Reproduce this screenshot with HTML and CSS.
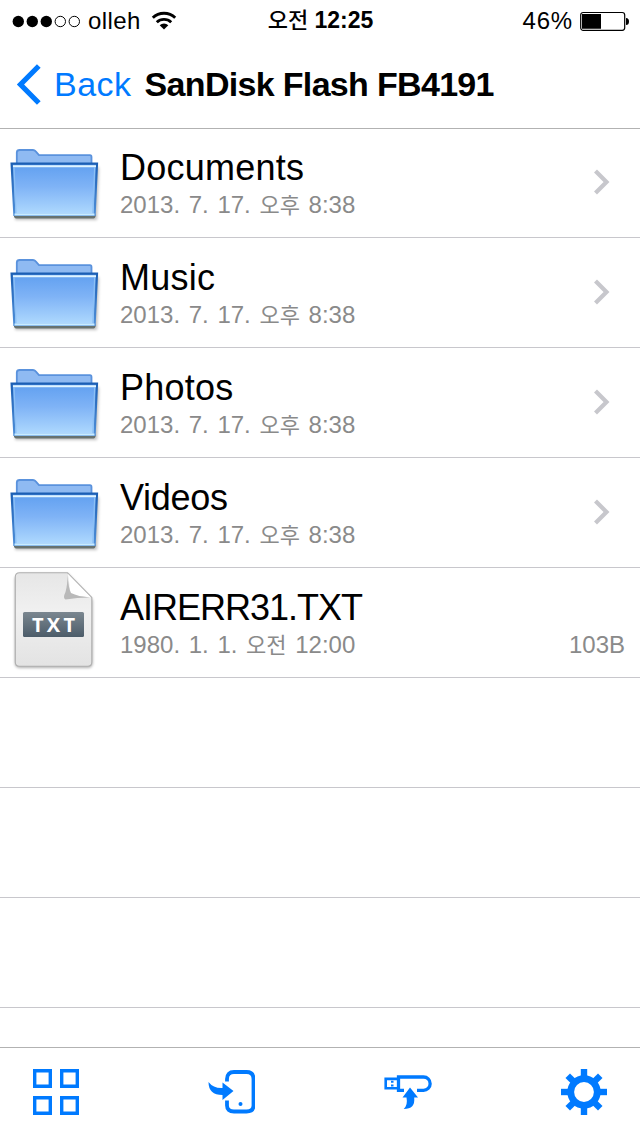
FILE: index.html
```html
<!DOCTYPE html>
<html lang="ko">
<head>
  <meta charset="UTF-8">
  <meta name="viewport" content="width=device-width, initial-scale=1.0">
  <title>SanDisk Flash FB4191</title>
  <link rel="stylesheet" href="styles.css">
</head>
<body>
  <svg class="defs" width="0" height="0">
    <defs>
      <linearGradient id="folderFront" x1="0" y1="0" x2="0" y2="1">
        <stop offset="0" stop-color="#5f9ff0"/>
        <stop offset="0.45" stop-color="#7fb3f6"/>
        <stop offset="1" stop-color="#b0dafe"/>
      </linearGradient>
      <linearGradient id="folderEdge" x1="0" y1="0" x2="0" y2="1">
        <stop offset="0" stop-color="#1c5fb4"/>
        <stop offset="1" stop-color="#4f8fd8"/>
      </linearGradient>
      <linearGradient id="paper" x1="0" y1="0" x2="0" y2="1">
        <stop offset="0" stop-color="#e6e6e6"/>
        <stop offset="0.4" stop-color="#f0f0f0"/>
        <stop offset="1" stop-color="#e3e3e3"/>
      </linearGradient>
      <linearGradient id="label" x1="0" y1="0" x2="0" y2="1">
        <stop offset="0" stop-color="#7b8790"/>
        <stop offset="1" stop-color="#4c5c69"/>
      </linearGradient>
      <filter id="soft" x="-20%" y="-20%" width="140%" height="140%">
        <feGaussianBlur stdDeviation="1.8"/>
      </filter>
    </defs>
    <symbol id="folder" viewBox="0 0 110 109">
      <path d="M18 38H97L99 40 97 92H15z" fill="#000" opacity=".25" filter="url(#soft)"/>
      <path d="M16.800 38V24.500Q17 22 19.500 22H33Q34.500 22 35.500 23.200L39 27.200H90Q91.500 27.200 91.500 29V38z" fill="#8fbaf2" stroke="#5a92dd" stroke-width="1.800"/>
      <path d="M14 86.500H95.500V88.500Q95 90.500 93.500 90.500H16Q14.500 90.500 14 88.500z" fill="#66716f"/>
      <path d="M11.600 35.700H97L94.600 86.800H14.400z" fill="url(#folderFront)" stroke="url(#folderEdge)" stroke-width="2.200"/>
      <path d="M13 38.300H96" stroke="#e0f4ff" stroke-width="2"/>
      <path d="M14 39L16 86M94.700 39L92.800 86" stroke="#8cc0f5" stroke-width="1.200"/>
      <path d="M14.500 86.500H94.500" stroke="#c9ecff" stroke-width="1.800"/>
    </symbol>
    <symbol id="chevron" viewBox="0 0 20 28">
      <path d="M3.500 3L14.500 14 3.500 25" fill="none" stroke="#c7c7cc" stroke-width="4.200"/>
    </symbol>
  </svg>

  <header>
    <div class="status">
      <div class="carrier">
        <svg width="68" height="14" viewBox="0 0 68 14">
          <g fill="#000"><circle cx="6.300" cy="7.500" r="5.700"/><circle cx="20.300" cy="7.500" r="5.700"/><circle cx="34.300" cy="7.500" r="5.700"/></g>
          <g fill="none" stroke="#000"><circle cx="48.300" cy="7.500" r="5.200"/><circle cx="62.300" cy="7.500" r="5.200"/></g>
        </svg>
        <span class="carrier-name">olleh</span>
        <svg width="26" height="20" viewBox="0 0 26 20">
          <g fill="none" stroke="#000" stroke-width="2.900">
            <path d="M1.800 6.800A16 16 0 0 1 24.200 6.800"/>
            <path d="M5.800 11.200A10.500 10.500 0 0 1 20.200 11.200"/>
          </g>
          <path d="M8.700 14.200A6.200 6.200 0 0 1 17.300 14.200L13 18.600z"/>
        </svg>
      </div>
      <div class="clock"><span class="ko">오전</span> 12:25</div>
      <div class="power">
        <span class="percent">46%</span>
        <svg width="49" height="20" viewBox="0 0 49 20">
          <rect x="0.700" y="1.500" width="44" height="17.800" rx="2.500" fill="none" stroke="#000" stroke-width="1.200"/>
          <path d="M2 3H21V17.800H2zM46 7Q49 7 49 10.500T46 14z"/>
        </svg>
      </div>
    </div>
    <nav>
      <a class="back" href="#">
        <svg width="26" height="42" viewBox="0 0 26 42"><path d="M22.800 3L4.500 21.500 22.800 40" fill="none" stroke="#007aff" stroke-width="5.200"/></svg>
        <span>Back</span>
      </a>
      <h1>SanDisk Flash FB4191</h1>
    </nav>
  </header>

  <main class="list">
    <div class="row">
      <svg class="thumb"><use href="#folder"/></svg>
      <div class="info"><h2>Documents</h2><p>2013. 7. 17. <span class="ko">오후</span> 8:38</p></div>
      <svg class="chevron"><use href="#chevron"/></svg>
    </div>
    <div class="row">
      <svg class="thumb"><use href="#folder"/></svg>
      <div class="info"><h2>Music</h2><p>2013. 7. 17. <span class="ko">오후</span> 8:38</p></div>
      <svg class="chevron"><use href="#chevron"/></svg>
    </div>
    <div class="row">
      <svg class="thumb"><use href="#folder"/></svg>
      <div class="info"><h2>Photos</h2><p>2013. 7. 17. <span class="ko">오후</span> 8:38</p></div>
      <svg class="chevron"><use href="#chevron"/></svg>
    </div>
    <div class="row">
      <svg class="thumb"><use href="#folder"/></svg>
      <div class="info"><h2 class="videos">Videos</h2><p>2013. 7. 17. <span class="ko">오후</span> 8:38</p></div>
      <svg class="chevron"><use href="#chevron"/></svg>
    </div>
    <div class="row">
      <svg class="thumb" viewBox="0 0 110 109">
        <path d="M19 6H68L92.500 32V95Q92.500 99.800 88 99.800H20Q15 99.800 15 95V10z" fill="#000" opacity=".35" filter="url(#soft)"/>
        <path d="M19.500 4.800H67.500L91.800 29.500V94Q91.800 98.300 87.500 98.300H19.500Q15.300 98.300 15.300 94V9Q15.300 4.800 19.500 4.800z" fill="url(#paper)" stroke="#b0b0b0" stroke-width="1.100"/>
        <path d="M68 6L91 29.500Q76 26.500 70 29 70 17 68 6z" fill="#fff"/>
        <path d="M67.500 7Q68.500 20 71 25 78 28.500 90 29.500 77 29.500 65.500 31.500 62.500 30 65.500 24 67.500 17 67.500 7z" fill="#b9b9b9"/>
        <rect x="23" y="44" width="61" height="25" rx="1.500" fill="url(#label)"/>
        <text class="ext" x="32" y="63.800" textLength="43">TXT</text>
      </svg>
      <div class="info"><h2 class="file">AIRERR31.TXT</h2><p>1980. 1. 1. <span class="ko">오전</span> 12:00</p></div>
      <span class="size">103B</span>
    </div>
    <div class="row"></div>
    <div class="row"></div>
    <div class="row"></div>
  </main>

  <footer>
    <svg width="48" height="48" viewBox="0 0 48 48">
      <path d="M2.700 2.700h15.600v15.600H2.700zM29.700 2.700h15.600v15.600H29.700zM2.700 29.700h15.600v15.600H2.700zM29.700 29.700h15.600v15.600H29.700z" fill="none" stroke="#007aff" stroke-width="3.400"/>
    </svg>
    <svg width="48" height="48" viewBox="-1.500 0 48 48">
      <path d="M18.500 13.500V11Q18.500 4 25.500 4H38Q45 4 45 11V37.500Q45 43.500 38 43.500H25.500Q18.500 43.500 18.500 37.500V32.500" fill="none" stroke="#007aff" stroke-width="3.800"/>
      <circle cx="32" cy="36" r="2" fill="#007aff"/>
      <path d="M0 14Q5 20.500 14 20V14.500L25 23 14 32V27Q0 27 0 14z" fill="#007aff"/>
    </svg>
    <svg width="50" height="48" viewBox="0 0 50 48">
      <g fill="none" stroke="#007aff">
        <path d="M21 22.300H15.500V9H40.500A6.600 6.600 0 0 1 40.500 22.300H34" stroke-width="3.300"/>
        <path d="M15 10.900H2.700V20.300H15" stroke-width="2.600"/>
      </g>
      <path d="M8 12.800h2.500v2H8zM8 16.500h2.500v2H8z" fill="#007aff"/>
      <path d="M27 19.500L35 29.500H31.200Q32.500 41 20.700 41 25 37 23.500 29.500H19.500z" fill="#007aff"/>
    </svg>
    <svg width="48" height="48" viewBox="-24 -24 48 48">
      <circle r="13.300" fill="none" stroke="#007aff" stroke-width="6.800"/>
      <g fill="#007aff">
        <path id="tooth" d="M-3.200-23H3.200V-14H-3.200z"/>
        <use href="#tooth" transform="rotate(45)"/><use href="#tooth" transform="rotate(90)"/>
        <use href="#tooth" transform="rotate(135)"/><use href="#tooth" transform="rotate(180)"/>
        <use href="#tooth" transform="rotate(225)"/><use href="#tooth" transform="rotate(270)"/>
        <use href="#tooth" transform="rotate(315)"/>
      </g>
    </svg>
  </footer>
</body>
</html>
```

FILE: styles.css
```css
* { box-sizing: border-box; margin: 0; padding: 0; }
body { width: 640px; height: 1136px; display: flex; flex-direction: column; overflow: hidden; background: #fff; color: #000; font-family: "Liberation Sans", "Noto Sans CJK KR", sans-serif; white-space: nowrap; }
svg { display: block; flex: none; }
.defs { position: absolute; }

header { height: 129px; margin-bottom: -1px; border-bottom: 1px solid #b2b2b2; flex: none; }
.status { height: 40px; display: grid; grid-template-columns: 1fr auto 1fr; align-items: center; padding: 0 11px 0 12px; font-size: 24px; line-height: 40px; }
.carrier, .power { display: flex; align-items: center; }
.carrier-name { margin: 0 10px 0 8px; letter-spacing: 0.4px; }
.clock { font-size: 23px; font-weight: bold; }
.clock .ko { font-size: 22px; font-weight: 500; }
.power { justify-content: flex-end; gap: 7px; }
.percent { letter-spacing: 0.8px; }

nav { height: 88px; display: flex; align-items: center; padding-left: 16px; }
.back { display: flex; align-items: center; gap: 12px; color: #007aff; text-decoration: none; font-size: 34px; letter-spacing: 0.5px; }
h1 { margin-left: 13px; font-size: 34px; font-weight: bold; letter-spacing: -0.68px; }

.list { flex: 1; min-height: 0; overflow: hidden; }
.row { height: 110px; display: flex; border-bottom: 1px solid #c8c7cc; }
.thumb { width: 110px; height: 109px; }
.info { flex: 1; padding: 20px 0 0 10px; }
h2 { font-size: 36px; font-weight: normal; line-height: 40px; letter-spacing: 0.25px; }
.videos { letter-spacing: -0.3px; }
.file { letter-spacing: -1px; }
.info p { font-size: 24px; line-height: 34px; color: #8a8a8a; word-spacing: 2px; }
.info .ko { font-size: 22px; }
.chevron { width: 20px; height: 28px; margin: 40px 28px 0 0; }
.size { padding: 60px 15px 0 0; font-size: 24px; line-height: 34px; color: #8a8a8a; }
.ext { font: bold 20px "Open Sans", sans-serif; fill: #fff; }

footer { height: 89px; flex: none; display: flex; justify-content: space-between; padding: 20px 32px 0; border-top: 1px solid #b2b2b2; }
```
